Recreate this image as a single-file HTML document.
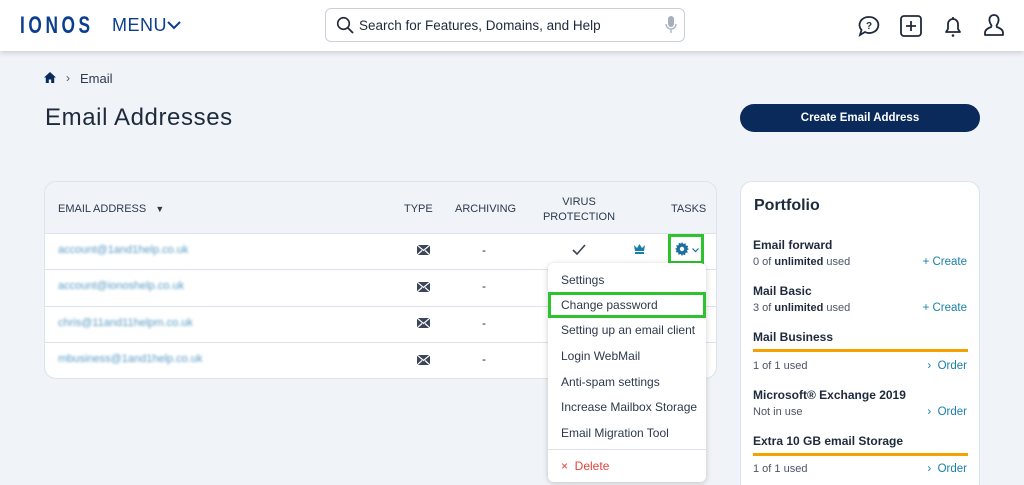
<!DOCTYPE html>
<html><head><meta charset="utf-8"><style>
*{box-sizing:border-box;margin:0;padding:0}
html,body{width:1024px;height:485px;overflow:hidden}
body{background:#f0f3f7;font-family:"Liberation Sans",sans-serif;color:#1e2a3c;position:relative}
.hdr{position:absolute;left:0;top:0;width:1024px;height:51px;background:#fff;box-shadow:0 2px 5px rgba(0,0,0,.15)}
.abs{position:absolute}
.card{position:absolute;background:#fff;border:1px solid #dde3ea;border-radius:12px}
.th{font-size:11px;color:#2c3a4c;position:absolute;text-align:center}
.row{position:absolute;left:0;width:671px;height:1px;background:#dde3ea}
.em{position:absolute;left:13px;font-size:11px;color:#5a9cc4;filter:blur(1.4px)}
.dash{position:absolute;left:437px;font-size:12px}
.menu{position:absolute;left:548px;top:263px;width:158px;height:219px;background:#fff;border-radius:6px;box-shadow:0 1px 6px rgba(0,0,0,.2)}
.mi{position:absolute;left:13px;font-size:12px;color:#2c3a4c}
.pt{position:absolute;left:12px;font-size:12px;font-weight:bold;color:#1e2a3c}
.ps{position:absolute;left:12px;font-size:11px;color:#4a5566}
.pa{position:absolute;right:12px;font-size:11.5px;color:#1a7fa8}
.bar{position:absolute;left:12px;width:215px;height:3px;background:#f5a200}
</style></head><body>
<div class="hdr">
 <div class="abs" style="left:20px;top:12px;font-size:24px;font-weight:bold;color:#0b3e91;letter-spacing:5px;transform:scaleX(.72);transform-origin:left">IONOS</div>
 <div class="abs" style="left:112px;top:15px;font-size:18px;color:#0b3e91;letter-spacing:.5px">MENU</div>
 <svg class="abs" style="left:167px;top:20px" width="14" height="10"><path d="M1 2l6 6 6-6" stroke="#0b3e91" stroke-width="2" fill="none"/></svg>
 <div class="abs" style="left:325px;top:8px;width:360px;height:34px;border:1px solid #c9d0d8;border-radius:6px"></div>
 <svg class="abs" style="left:336px;top:16px" width="18" height="18"><circle cx="7.5" cy="7.5" r="5.8" stroke="#1e2a3c" stroke-width="1.6" fill="none"/><path d="M12 12l5 5" stroke="#1e2a3c" stroke-width="1.8"/></svg>
 <div class="abs" style="left:359px;top:18px;font-size:13.5px;color:#1e2a3c">Search for Features, Domains, and Help</div>
 <svg class="abs" style="left:665px;top:15px" width="12" height="20"><rect x="3" y="1" width="6" height="11" rx="3" fill="#a6b0bd"/><path d="M1 9a5 5 0 0 0 10 0M6 14v4" stroke="#a6b0bd" stroke-width="1.3" fill="none"/></svg>
 <svg class="abs" style="left:857px;top:14px" width="24" height="24"><path d="M12 3a9 8 0 1 1-4 15l-5 3 1.5-5A9 8 0 0 1 12 3z" stroke="#1e2a3c" stroke-width="1.8" fill="none"/><text x="12" y="15" font-size="10" font-weight="bold" text-anchor="middle" fill="#1e2a3c" font-family="Liberation Sans">?</text></svg>
 <svg class="abs" style="left:899px;top:14px" width="24" height="24"><rect x="2" y="2" width="20" height="20" rx="3" stroke="#1e2a3c" stroke-width="1.8" fill="none"/><path d="M12 7v10M7 12h10" stroke="#1e2a3c" stroke-width="1.8"/></svg>
 <svg class="abs" style="left:941px;top:14px" width="24" height="24"><path d="M5 18h14l-2-3V10a5 5 0 0 0-10 0v5z" stroke="#1e2a3c" stroke-width="1.8" fill="none" stroke-linejoin="round"/><path d="M12 3v2" stroke="#1e2a3c" stroke-width="1.8"/><circle cx="12" cy="21.5" r="1.3" fill="#1e2a3c"/></svg>
 <svg class="abs" style="left:982px;top:13px" width="24" height="24"><path d="M12 2c-3.5 0-5 3-4.5 6 .3 2 1.5 3.5 2 4.5l-.3 1.5C6 15 3 17 3 20v2h18v-2c0-3-3-5-6.2-6l-.3-1.5c.5-1 1.7-2.5 2-4.5.5-3-1-6-4.5-6z" stroke="#1e2a3c" stroke-width="1.8" fill="none" stroke-linejoin="round"/></svg>
</div>
<svg class="abs" style="left:44px;top:72px" width="12" height="11"><path d="M6 0L0 5.5h1.8V11h3V7.5h2.4V11h3V5.5H12z" fill="#0b2a5c"/></svg>
<div class="abs" style="left:66px;top:71px;font-size:12px;color:#4a5566">›</div>
<div class="abs" style="left:80px;top:71px;font-size:13px;color:#2c3a4c">Email</div>
<div class="abs" style="left:45px;top:104px;font-size:24px;color:#1e2a3c;letter-spacing:.6px">Email Addresses</div>
<div class="abs" style="left:740px;top:104px;width:240px;height:28px;border-radius:14px;background:#0b2a5c;color:#fff;font-size:11.5px;font-weight:bold;text-align:center;line-height:28px">Create Email Address</div>

<div class="card" style="left:44px;top:181px;width:673px;height:198px;overflow:hidden">
 <div class="abs" style="left:0;top:0;width:673px;height:51px;background:#f0f3f7"></div>
 <div class="th" style="left:13px;top:21px;text-align:left">EMAIL ADDRESS &nbsp;&nbsp;<span style="font-size:9px">▼</span></div>
 <div class="th" style="left:359px;top:21px">TYPE</div>
 <div class="th" style="left:410px;top:21px">ARCHIVING</div>
 <div class="th" style="left:497px;top:13px;width:74px;line-height:15px">VIRUS<br>PROTECTION</div>
 <div class="th" style="left:626px;top:21px">TASKS</div>
 <div class="row" style="top:51px"></div><div class="row" style="top:87px"></div><div class="row" style="top:124px"></div><div class="row" style="top:160px"></div>
 <div class="em" style="top:62px">account@1and1help.co.uk</div>
 <div class="em" style="top:98px">account@ionoshelp.co.uk</div>
 <div class="em" style="top:135px">chris@11and11helpm.co.uk</div>
 <div class="em" style="top:171px">mbusiness@1and1help.co.uk</div>
 <svg class="abs" style="left:372px;top:63px" width="13" height="10"><rect width="13" height="10" rx="1" fill="#3c4656"/><path d="M0 0l6.5 5.5L13 0M0 10l5-4.5M13 10l-5-4.5" stroke="#fff" stroke-width="1.2" fill="none"/></svg>
 <svg class="abs" style="left:372px;top:100px" width="13" height="10"><rect width="13" height="10" rx="1" fill="#3c4656"/><path d="M0 0l6.5 5.5L13 0M0 10l5-4.5M13 10l-5-4.5" stroke="#fff" stroke-width="1.2" fill="none"/></svg>
 <svg class="abs" style="left:372px;top:136px" width="13" height="10"><rect width="13" height="10" rx="1" fill="#3c4656"/><path d="M0 0l6.5 5.5L13 0M0 10l5-4.5M13 10l-5-4.5" stroke="#fff" stroke-width="1.2" fill="none"/></svg>
 <svg class="abs" style="left:372px;top:173px" width="13" height="10"><rect width="13" height="10" rx="1" fill="#3c4656"/><path d="M0 0l6.5 5.5L13 0M0 10l5-4.5M13 10l-5-4.5" stroke="#fff" stroke-width="1.2" fill="none"/></svg>
 <div class="dash" style="top:61px">-</div><div class="dash" style="top:97px">-</div><div class="dash" style="top:134px">-</div><div class="dash" style="top:170px">-</div>
 <svg class="abs" style="left:527px;top:62px" width="14" height="11"><path d="M1 6l4 4 8-9" stroke="#3c4656" stroke-width="1.6" fill="none"/></svg>
 <svg class="abs" style="left:589px;top:62px" width="11" height="10"><path d="M0 1l3 3 2.5-4 2.5 4 3-3-1 6H1z" fill="#1a7fa8"/><rect x="1" y="8" width="9" height="2" fill="#1a7fa8"/></svg>
 <div class="abs" style="left:623px;top:52px;width:36px;height:30px;border:3px solid #2fc22f"></div>
 <svg class="abs" style="left:630px;top:60px" width="14" height="14" viewBox="0 0 14 14"><path d="M7 0l1.3 2 2.3-.8.2 2.4 2.4.2-.8 2.3L14 7l-2 1.3.8 2.3-2.4.2-.2 2.4-2.3-.8L7 14l-1.3-2-2.3.8-.2-2.4-2.4-.2.8-2.3L0 7l2-1.3-.8-2.3 2.4-.2.2-2.4 2.3.8z" fill="#1a6fa0"/><circle cx="7" cy="7" r="2.2" fill="#fff"/></svg>
 <svg class="abs" style="left:647px;top:66px" width="7" height="5"><path d="M.5.5l3 3 3-3" stroke="#1a6fa0" stroke-width="1.2" fill="none"/></svg>
</div>

<div class="menu">
 <div class="mi" style="top:10px">Settings</div>
 <div class="abs" style="left:0;top:29px;width:158px;height:26px;border:3px solid #2fc22f"></div>
 <div class="mi" style="top:35px">Change password</div>
 <div class="mi" style="top:60px">Setting up an email client</div>
 <div class="mi" style="top:86px">Login WebMail</div>
 <div class="mi" style="top:112px">Anti-spam settings</div>
 <div class="mi" style="top:137px">Increase Mailbox Storage</div>
 <div class="mi" style="top:163px">Email Migration Tool</div>
 <div class="abs" style="left:0;top:186px;width:158px;height:1px;background:#dde3ea"></div>
 <div class="mi" style="top:196px;color:#e8403a">×&nbsp; Delete</div>
</div>

<div class="card" style="left:740px;top:181px;width:240px;height:320px">
 <div class="abs" style="left:13px;top:15px;font-size:16px;font-weight:bold;color:#1e2a3c">Portfolio</div>
 <div class="pt" style="top:56px">Email forward</div>
 <div class="ps" style="top:74px">0 of <b style="color:#1e2a3c">unlimited</b> used</div>
 <div class="pa" style="top:74px">+ Create</div>
 <div class="pt" style="top:102px">Mail Basic</div>
 <div class="ps" style="top:120px">3 of <b style="color:#1e2a3c">unlimited</b> used</div>
 <div class="pa" style="top:120px">+ Create</div>
 <div class="pt" style="top:148px">Mail Business</div>
 <div class="bar" style="top:167px"></div>
 <div class="ps" style="top:178px">1 of 1 used</div>
 <div class="pa" style="top:178px">›&nbsp; Order</div>
 <div class="pt" style="top:206px">Microsoft® Exchange 2019</div>
 <div class="ps" style="top:224px">Not in use</div>
 <div class="pa" style="top:224px">›&nbsp; Order</div>
 <div class="pt" style="top:252px">Extra 10 GB email Storage</div>
 <div class="bar" style="top:271px"></div>
 <div class="ps" style="top:281px">1 of 1 used</div>
 <div class="pa" style="top:281px">›&nbsp; Order</div>
</div>
</body></html>
